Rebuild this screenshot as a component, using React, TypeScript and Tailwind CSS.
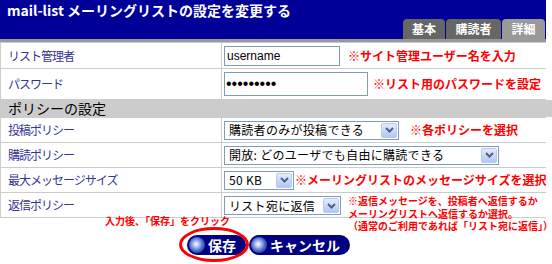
import React from 'react';

const labelCls = 'bg-white flex items-center pl-[7px] text-[12px] tracking-[-1px] text-[#333399] whitespace-nowrap';
const valueCls = 'bg-white flex items-center pl-[2px]';
const noteCls = 'text-[12px] font-bold text-[#ff0000] whitespace-nowrap leading-none';
const smallNoteCls = 'h-[12.5px] whitespace-nowrap text-[10px] font-bold leading-[12.5px] text-[#ff0000]';

function Arrow() {
  return (
    <span className="ml-auto mr-px flex h-[15px] w-[16px] shrink-0 items-center justify-center rounded-[2px] border border-[#b7c8f2] bg-gradient-to-b from-[#e4ecfe] to-[#b3c7f4]">
      <svg width="9" height="6" viewBox="0 0 9 6">
        <path d="M1 1l3.5 3.5L8 1" fill="none" stroke="#4d6185" strokeWidth="2" />
      </svg>
    </span>
  );
}

function Select({ value, width }: { value: string; width: string }) {
  return (
    <div className={`flex h-[19px] shrink-0 items-center border border-[#7f9db9] bg-white pl-[4px] text-[12px] tracking-[0.3px] text-black ${width}`}>
      <span className="whitespace-nowrap leading-none">{value}</span>
      <Arrow />
    </div>
  );
}

function NavButton({ label }: { label: string }) {
  return (
    <button className="flex h-[20px] items-center gap-[3px] rounded-full bg-[#000080] pl-[2px] pr-[10px] text-[14px] font-bold leading-none text-white">
      <span className="h-[16px] w-[16px] rounded-full bg-[radial-gradient(circle_at_45%_45%,#ffffff_0%,#b3c5f3_22%,#4565c8_55%,#0b1a6e_100%)]" />
      {label}
    </button>
  );
}

export default function App() {
  return (
    <div className="h-[264px] w-[552px] overflow-hidden bg-white font-['Noto_Sans_CJK_JP',sans-serif]">
      <div className="w-[546px]">
        {/* header */}
        <div className="flex flex-col bg-[#000099]">
          <div className="h-[19px] pl-[7px] pt-px text-[14px] font-bold leading-[18px] text-white">
            mail-list メーリングリストの設定を変更する
          </div>
          <div className="flex h-[20px] justify-end gap-px pr-px">
            <div className="flex w-[42px] items-center justify-center rounded-t-[4px] bg-[#666666] text-[12px] font-bold text-white">基本</div>
            <div className="flex w-[55px] items-center justify-center rounded-t-[4px] bg-[#666666] text-[12px] font-bold text-white">購読者</div>
            <div className="flex w-[43px] items-center justify-center rounded-t-[4px] bg-[#999999] text-[12px] font-bold text-white">詳細</div>
          </div>
        </div>
        <div className="h-[3px] bg-[#999999]" />

        {/* form table */}
        <div className="grid grid-cols-[220px_1fr] gap-px bg-[#cccccc] p-px">
          <div className={`${labelCls} h-[25px]`}>リスト管理者</div>
          <div className={`${valueCls} h-[25px]`}>
            <input
              readOnly
              value="username"
              className="h-[20px] w-[116px] border border-[#7f9db9] pl-[2px] font-['Liberation_Sans',sans-serif] text-[12px] text-black outline-none"
            />
            <span className={`${noteCls} ml-[8px]`}>※サイト管理ユーザー名を入力</span>
          </div>

          <div className={`${labelCls} h-[30px]`}>パスワード</div>
          <div className={`${valueCls} h-[30px]`}>
            <input
              readOnly
              type="password"
              value="123456789"
              className="h-[24px] w-[144px] border border-[#7f9db9] py-0 pl-[1px] font-['Liberation_Sans',sans-serif] text-[16px] leading-none text-black outline-none"
            />
            <span className={`${noteCls} ml-[5px]`}>※リスト用のパスワードを設定</span>
          </div>

          <div className="col-span-2 flex h-[17px] items-center bg-[#cccccc] pl-[7px] text-[14px] text-black">ポリシーの設定</div>

          <div className={`${labelCls} h-[24px]`}>投稿ポリシー</div>
          <div className={`${valueCls} h-[24px]`}>
            <Select value="購読者のみが投稿できる" width="w-[175px]" />
            <span className={`${noteCls} ml-[11px]`}>※各ポリシーを選択</span>
          </div>

          <div className={`${labelCls} h-[24px]`}>購読ポリシー</div>
          <div className={`${valueCls} h-[24px]`}>
            <Select value="開放: どのユーザでも自由に購読できる" width="w-[275px]" />
          </div>

          <div className={`${labelCls} h-[24px]`}>最大メッセージサイズ</div>
          <div className={`${valueCls} h-[24px]`}>
            <Select value="50 KB" width="w-[70px]" />
            <span className={`${noteCls} ml-px`}>※メーリングリストのメッセージサイズを選択</span>
          </div>

          <div className={`${labelCls} h-[24px]`}>返信ポリシー</div>
          <div className="flex h-[24px] items-start bg-white pl-[2px]">
            <div className="mt-[3px]">
              <Select value="リスト宛に返信" width="w-[117px]" />
            </div>
            <div className="ml-[7px] mt-[2px] flex flex-col">
              <div className={smallNoteCls}>※返信メッセージを、投稿者へ返信するか</div>
              <div className={smallNoteCls}>メーリングリストへ返信するか選択。</div>
              <div className={smallNoteCls}>（通常のご利用であれば「リスト宛に返信」）</div>
            </div>
          </div>
        </div>

        {/* buttons */}
        <div className="mt-[17px] flex justify-center gap-[3px] pr-[9px]">
          <div className="relative">
            <span className="absolute right-[16px] top-[-19px] whitespace-nowrap text-[10px] font-bold leading-none text-[#ff0000]">
              入力後、「保存」をクリック
            </span>
            <NavButton label="保存" />
            <span className="absolute left-[-8px] top-[-8px] h-[35px] w-[70px] rounded-[50%] border-[3px] border-[#ff0000]" />
          </div>
          <NavButton label="キャンセル" />
        </div>
      </div>
    </div>
  );
}
